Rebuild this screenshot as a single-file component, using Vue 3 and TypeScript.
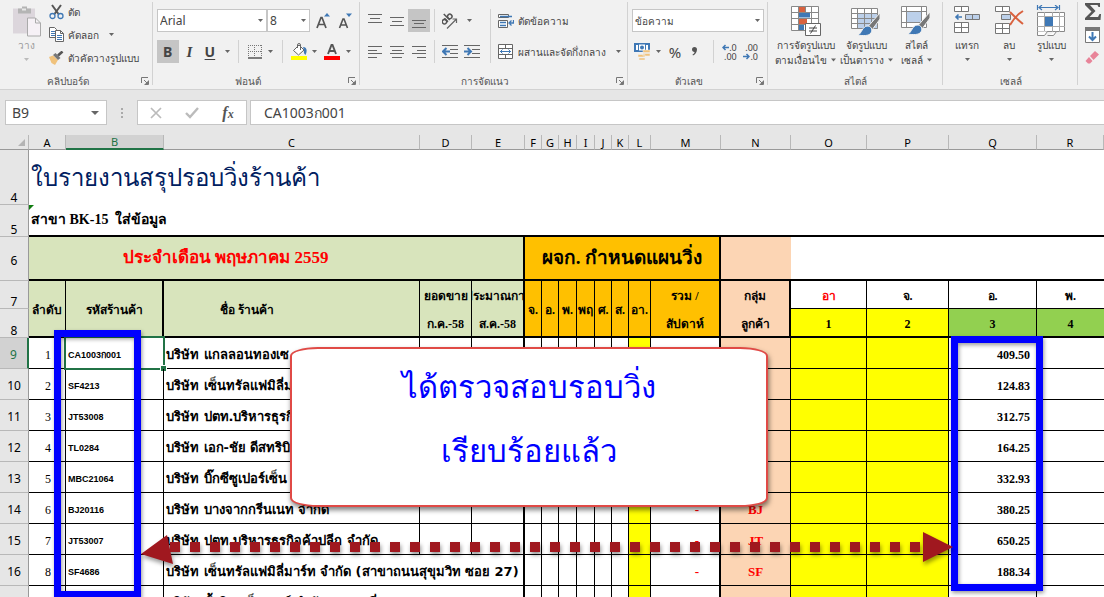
<script setup lang="ts">
import { h, ref } from 'vue'

interface StoreRow {
  row: number
  order: number
  code: string
  name: string
  visits: string
  group: string
  amount: string
}

const Caret = () =>
  h('svg', { class: 'caret', viewBox: '0 0 5 3', width: 5, height: 3, 'aria-hidden': 'true' }, [
    h('path', { d: 'M0 0h5L2.5 3z', fill: 'currentColor' }),
  ])

const Launcher = () =>
  h('svg', { viewBox: '0 0 8 8', width: 8, height: 8, 'aria-hidden': 'true' }, [
    h('path', { d: 'M.5 6V.5H7M3 3l3 3M7.5 3.500v4h-4', fill: 'none', stroke: '#777' }),
    h('path', { d: 'M7 4v3H4z', fill: '#777' }),
  ])

const fontName = ref('Arial')
const fontSize = ref('8')
const numberFormat = ref('ข้อความ')
const cellName = ref('B9')
const formula = ref('CA1003ก001')

const letters = 'ABCDEFGHIJKLMNOPQR'.split('')
const days = ['จ.', 'อ.', 'พ.', 'พฤ', 'ศ.', 'ส.', 'อา.']
const dayCells = [0, 1, 2, 3, 4, 5]

const stores: StoreRow[] = [
  { row: 9, order: 1, code: 'CA1003ก001', name: 'บริษัท แกลลอนทองเซ', visits: '', group: '', amount: '409.50' },
  { row: 10, order: 2, code: 'SF4213', name: 'บริษัท เซ็นทรัลแฟมิลี่มา', visits: '', group: '', amount: '124.83' },
  { row: 11, order: 3, code: 'JT53008', name: 'บริษัท ปตท.บริหารธุรกิจ', visits: '', group: '', amount: '312.75' },
  { row: 12, order: 4, code: 'TL0284', name: 'บริษัท เอก-ชัย ดีสทริบิว', visits: '', group: '', amount: '164.25' },
  { row: 13, order: 5, code: 'MBC21064', name: 'บริษัท บิ๊กซีซูเปอร์เซ็น', visits: '', group: '', amount: '332.93' },
  { row: 14, order: 6, code: 'BJ20116', name: 'บริษัท บางจากกรีนเนท จำกัด', visits: '-', group: 'BJ', amount: '380.25' },
  { row: 15, order: 7, code: 'JT53007', name: 'บริษัท ปตท.บริหารธุรกิจค้าปลีก จำกัด', visits: '-', group: 'JT', amount: '650.25' },
  { row: 16, order: 8, code: 'SF4686', name: 'บริษัท เซ็นทรัลแฟมิลี่มาร์ท จำกัด (สาขาถนนสุขุมวิท ซอย 27)', visits: '-', group: 'SF', amount: '188.34' },
]
</script>

<template>
  <div class="app">
    <header class="ribbon">
      <section class="group clipboard">
        <div class="body row-body">
          <button class="big paste" disabled>
            <svg width="28" height="31" viewBox="0 0 28 31">
              <path d="M0 3h22v25H0z" fill="#dcd6dc" />
              <path d="M5 3h4V1h5v2h4v5H5z" fill="#b4b4b4" />
              <path d="M9 3h4v2H9z" fill="#e8e8e8" />
              <path d="M14.500 12.500h8l5 5v13h-13z" fill="#f6f1f6" stroke="#aaa" />
              <path d="M22.500 12.500v5h5" fill="none" stroke="#aaa" />
            </svg>
            <span>วาง</span>
            <Caret />
          </button>
          <div class="stack">
            <button class="line">
              <svg width="15" height="16" viewBox="0 0 15 16">
                <path d="M3 1l6.500 9M12 1L5.500 10" stroke="#555" stroke-width="2" fill="none" />
                <circle cx="3.500" cy="12" r="2.500" fill="none" stroke="#3f78b5" stroke-width="1.300" />
                <circle cx="11.500" cy="12" r="2.500" fill="none" stroke="#3f78b5" stroke-width="1.300" />
              </svg>
              <span>ตัด</span>
            </button>
            <button class="line">
              <svg width="15" height="15" viewBox="0 0 15 15">
                <path d="M.5.500h5l2 2v8h-7z" fill="#fff" stroke="#666" />
                <path d="M2 4.500h4M2 6.500h4M2 8.500h4" stroke="#3f78b5" />
                <path d="M6.500 3.500h5l3 3v8h-8z" fill="#fff" stroke="#666" />
                <path d="M11.500 3.500v3h3" fill="none" stroke="#666" />
                <path d="M8 8.500h5M8 10.500h5M8 12.500h5" stroke="#3f78b5" />
              </svg>
              <span>คัดลอก</span>
              <Caret />
            </button>
            <button class="line">
              <svg width="15" height="14" viewBox="0 0 15 14">
                <path d="M0 6l4-1.500L9 9l-3 5-3.500-2z" fill="#f0c27c" />
                <path d="M4 4l2.500-2 5 5-2.500 2z" fill="#777" />
                <path d="M9 4.500L13.500.500" stroke="#555" stroke-width="2.600" />
              </svg>
              <span>ตัวคัดวางรูปแบบ</span>
            </button>
          </div>
        </div>
        <footer><span>คลิปบอร์ด</span><button class="launch" aria-label="คลิปบอร์ด"><Launcher /></button></footer>
      </section>

      <section class="group font">
        <div class="body">
          <div class="tools">
            <label class="combo name"><select v-model="fontName" aria-label="แบบอักษร"><option>Arial</option></select><Caret /></label>
            <label class="combo size"><select v-model="fontSize" aria-label="ขนาด"><option>8</option></select><Caret /></label>
            <button class="tool w22">
              <svg width="14" height="16" viewBox="0 0 14 16">
                <path d="M1 15L5 4.500h1L10 15M2.500 11.500h6" fill="none" stroke="#555" stroke-width="1.700" />
                <path d="M8 3.500h6L11 0z" fill="#3f78b5" />
              </svg>
            </button>
            <button class="tool w22">
              <svg width="14" height="16" viewBox="0 0 14 16">
                <path d="M1.500 15L5 6h1l3.500 9M3 12h5" fill="none" stroke="#555" stroke-width="1.600" />
                <path d="M8 .500h6L11 4z" fill="#3f78b5" />
              </svg>
            </button>
          </div>
          <div class="tools">
            <button class="tool w22 on"><b>B</b></button>
            <button class="tool w22"><i class="it">I</i></button>
            <button class="tool w20"><b class="under">U</b></button>
            <button class="tool drop"><Caret /></button>
            <span class="sep"></span>
            <button class="tool w16">
              <svg width="14" height="14" viewBox="0 0 14 14">
                <path d="M0 .500h14M0 6.500h14M.5 0v12M6.500 0v12M13.500 0v12" stroke="#777" stroke-dasharray="1 1" />
                <path d="M0 13h14" stroke="#555" stroke-width="1.500" />
              </svg>
            </button>
            <button class="tool drop"><Caret /></button>
            <span class="sep"></span>
            <button class="tool w16">
              <svg width="16" height="17" viewBox="0 0 16 17">
                <path d="M2.500 7.500L8 2l5 5-5.500 5z" fill="#fff" stroke="#666" />
                <path d="M6.500 5V2a1.500 1.500 0 0 1 3 0v5" fill="none" stroke="#666" />
                <path d="M12 4c4 0 4.500 4 2.500 8-1.500-1-2-3-1.500-5z" fill="#3f78b5" />
                <path d="M0 13h16v4H0z" fill="#ff0" />
              </svg>
            </button>
            <button class="tool drop"><Caret /></button>
            <button class="tool w16 gap">
              <svg width="16" height="17" viewBox="0 0 16 17">
                <path d="M4 11l3.500-9h1L12 11M5.500 8h5" fill="none" stroke="#555" stroke-width="1.900" />
                <path d="M0 13h16v4H0z" fill="red" />
              </svg>
            </button>
            <button class="tool drop"><Caret /></button>
          </div>
        </div>
        <footer><span>ฟอนต์</span><button class="launch" aria-label="ฟอนต์"><Launcher /></button></footer>
      </section>

      <section class="group align">
        <div class="body align-body">
          <div class="align-left">
            <div class="tools">
              <button class="tool w22"><svg width="14" height="14" viewBox="0 0 14 14"><path d="M0 .500h14M2 4.500h10M0 8.500h14" class="ln" /></svg></button>
              <button class="tool w22"><svg width="14" height="14" viewBox="0 0 14 14"><path d="M0 3.500h14M2 7.500h10M0 11.500h14" class="ln" /></svg></button>
              <button class="tool w22 on"><svg width="14" height="14" viewBox="0 0 14 14"><path d="M0 6.500h14M2 9.500h10M0 13.500h14" class="ln" /></svg></button>
              <span class="sep tight"></span>
              <button class="tool w22">
                <svg width="16" height="16" viewBox="0 0 16 16">
                  <g transform="rotate(-45 6 8)" fill="none" stroke="#555" stroke-width="1.500">
                    <circle cx="3" cy="6" r="2.200" /><path d="M5.500 3.500v5M8 0v8.500" /><circle cx="10.500" cy="6" r="2.200" />
                  </g>
                  <path d="M5 15.500L14.500 6M10.500 6h4v4" fill="none" stroke="#666" stroke-width="1.200" />
                </svg>
              </button>
              <button class="tool drop"><Caret /></button>
            </div>
            <div class="tools">
              <button class="tool w22"><svg width="14" height="14" viewBox="0 0 14 14"><path d="M0 1.500h14M0 5.500h9M0 8.500h14M0 12.500h9" class="ln" /></svg></button>
              <button class="tool w22"><svg width="14" height="14" viewBox="0 0 14 14"><path d="M0 1.500h14M2 5.500h10M0 8.500h14M2 12.500h10" class="ln" /></svg></button>
              <button class="tool w22"><svg width="14" height="14" viewBox="0 0 14 14"><path d="M0 1.500h14M5 5.500h9M0 8.500h14M5 12.500h9" class="ln" /></svg></button>
              <span class="sep tight"></span>
              <button class="tool w22">
                <svg width="16" height="14" viewBox="0 0 16 14"><path d="M0 .500h16M8 4.500h8M8 8.500h8M0 12.500h16" class="ln" /><path d="M8 6.500H2M4.500 3L1 6.500 4.500 10" fill="none" stroke="#3f78b5" stroke-width="2" /></svg>
              </button>
              <button class="tool w22">
                <svg width="16" height="14" viewBox="0 0 16 14"><path d="M0 .500h16M8 4.500h8M8 8.500h8M0 12.500h16" class="ln" /><path d="M0 6.500h6M3.500 3L7 6.500 3.500 10" fill="none" stroke="#3f78b5" stroke-width="2" /></svg>
              </button>
            </div>
          </div>
          <div class="align-right">
            <button class="wide">
              <svg width="16" height="16" viewBox="0 0 16 16">
                <path d="M.5 1.500h10v3H.5zM.5 7.500h9v7H.5z" fill="#fff" stroke="#666" />
                <path d="M2 3.500h12M2 9.500h6M2 12.500h6M15.500 7v3H12M13.500 7.500L11 10l2.500 2.500" stroke="#3f78b5" fill="none" stroke-width="1.300" />
              </svg>
              <span>ตัดข้อความ</span>
            </button>
            <button class="wide">
              <svg width="16" height="16" viewBox="0 0 16 16">
                <path d="M.5.500h14v14H.5zM.5 4.500h14M.5 10.500h14M7.500.500v4M7.500 10.500v4" fill="#fff" stroke="#666" />
                <path d="M2 7.500h11M4.500 5.500l-2 2 2 2M10.500 5.500l2 2-2 2" fill="none" stroke="#3f78b5" />
              </svg>
              <span>ผสานและจัดกึ่งกลาง</span>
              <Caret />
            </button>
          </div>
        </div>
        <footer><span>การจัดแนว</span><button class="launch" aria-label="การจัดแนว"><Launcher /></button></footer>
      </section>

      <section class="group number">
        <div class="body">
          <div class="tools">
            <label class="combo fill"><select v-model="numberFormat" aria-label="รูปแบบตัวเลข"><option>ข้อความ</option></select><Caret /></label>
          </div>
          <div class="tools">
            <button class="tool w22">
              <svg width="17" height="17" viewBox="0 0 17 17">
                <path d="M0 0h16v9H0z" fill="#3f78b5" />
                <path d="M2 2h2v5H2zM12 2h2v5h-2zM5 1.500h6v6H5z" fill="#fff" />
                <circle cx="8" cy="4.500" r="2" fill="#3f78b5" />
                <path d="M9 7h7v2.500H9zM9 10.500h7V13H9zM4 11.500h7V14H4zM5 15h6v2H5z" fill="#f0c27c" stroke="#f1f1f1" stroke-width=".5" />
              </svg>
            </button>
            <button class="tool drop narrow"><Caret /></button>
            <button class="tool w22 pct">%</button>
            <button class="tool w20"><svg width="6" height="9" viewBox="0 0 6 9"><path d="M0 2.500a2.400 2.400 0 0 1 5 0C5 5 3.500 7.500 1 8.500L.5 7.500C2 6.800 2.500 6 2.500 5 1 5 0 4 0 2.500z" fill="#555" /></svg></button>
            <span class="sep"></span>
            <button class="tool decimal"><span><svg width="7" height="7" viewBox="0 0 7 7"><path d="M7 3.500H1M3.500 1L1 3.500 3.500 6" class="arr" /></svg>.0</span><span>.00</span></button>
            <button class="tool decimal"><span>.00</span><span><svg width="7" height="7" viewBox="0 0 7 7"><path d="M0 3.500h6M3.500 1L6 3.500 3.500 6" class="arr" /></svg>.0</span></button>
          </div>
        </div>
        <footer><span>ตัวเลข</span><button class="launch" aria-label="ตัวเลข"><Launcher /></button></footer>
      </section>

      <section class="group styles">
        <div class="body row-body">
          <button class="big s1">
            <svg width="30" height="30" viewBox="0 0 30 30">
              <path d="M.5.500h27v24H.5z" fill="#fff" />
              <path d="M8 0h6v6H8zM8 12h8v6H8z" fill="#d9623f" />
              <path d="M8 6.500h11v5H8zM8 19h5v5H8z" fill="#3f78b5" />
              <path d="M.5.500h27v24H.5zM0 6.500h28M0 12.500h28M0 18.500h28M7.500 0v25M14.500 0v6M20.500 0v25" fill="none" stroke="#888" />
              <path d="M14.500 17.500h15v12h-15z" fill="#fff" stroke="#666" />
              <path d="M18 22h8M18 25h8M24.500 19.500l-5 8" stroke="#444" fill="none" />
            </svg>
            <span>การจัดรูปแบบ</span><span>ตามเงื่อนไข <Caret /></span>
          </button>
          <button class="big s2">
            <svg width="30" height="30" viewBox="0 0 30 30">
              <path d="M.5 2.500h26v20H.5z" fill="#fff" />
              <path d="M7 7h20v16H7z" fill="#bcd0ea" />
              <path d="M.5 2.500h26v20H.5zM0 7.500h27M0 12.500h27M0 17.500h27M6.500 2v21M13.500 2v21M20.500 2v21" fill="none" stroke="#888" />
              <path d="M29 7v6l-8 11-4-3.500z" fill="#777" stroke="#f1f1f1" />
              <path d="M16 20c4 0 6 3 4 7-2 3-8 3-13 2 4-2 4-8 9-9z" fill="#3f78b5" stroke="#f1f1f1" />
            </svg>
            <span>จัดรูปแบบ</span><span>เป็นตาราง <Caret /></span>
          </button>
          <button class="big s3">
            <svg width="30" height="30" viewBox="0 0 30 30">
              <path d="M.5.500h25v21H.5zM0 5.500h26M0 16.500h26M5.500 0v22M20.500 0v22" fill="#fff" stroke="#888" />
              <path d="M6 6h14v10H6z" fill="#bcd0ea" />
              <path d="M29 6v6l-8 11-4-3.500z" fill="#777" stroke="#f1f1f1" />
              <path d="M16 19c4 0 6 3 4 7-2 3-8 3-13 2 4-2 4-8 9-9z" fill="#3f78b5" stroke="#f1f1f1" />
            </svg>
            <span>สไตล์</span><span>เซลล์ <Caret /></span>
          </button>
        </div>
        <footer><span>สไตล์</span></footer>
      </section>

      <section class="group cells">
        <div class="body row-body">
          <button class="big c1">
            <svg width="28" height="30" viewBox="0 0 28 30">
              <path d="M1.500.500h14v5h-14zM8.500.500v5M1.500 16.500h14v10h-14zM8.500 16.500v10M1.500 21.500h14" fill="#fff" stroke="#777" />
              <path d="M12.500 8.500h14v5h-14zM19.500 8.500v5" fill="#bcd0ea" stroke="#777" />
              <path d="M9 11H3M5.500 8.500L3 11l2.500 2.500" fill="none" stroke="#3f78b5" stroke-width="1.600" />
            </svg>
            <span>แทรก</span><Caret />
          </button>
          <button class="big c1">
            <svg width="30" height="30" viewBox="0 0 30 30">
              <path d="M1.500.500h14v5h-14zM8.500.500v5M1.500 17.500h14v10h-14zM8.500 17.500v10M1.500 22.500h14" fill="#fff" stroke="#777" />
              <path d="M7.500 8.500h9v5h-9z" fill="#bcd0ea" stroke="#777" />
              <path d="M16 6c4 4 8 8 13 12M29 5c-5 3-9 7-13 14" fill="none" stroke="#d9623f" stroke-width="2" />
            </svg>
            <span>ลบ</span><Caret />
          </button>
          <button class="big c1">
            <svg width="30" height="32" viewBox="0 0 30 32">
              <path d="M1.500 0v5M23.500 0v5M3 2.500h19M6 0L3 2.500 6 5M19 0l3 2.500L19 5" fill="none" stroke="#3f78b5" stroke-width="1.200" />
              <path d="M1.500 7.500h27v19h-27z" fill="#fff" stroke="#888" />
              <path d="M8.500 7v20M16.500 7v20M23.500 7v20M1 11.500h28M1 21.500h28" stroke="#aaa" />
              <path d="M9 12h8v9H9z" fill="#3f78b5" />
              <path d="M1.500 26.500v4h7l3-4M11.500 30.500h6l3-4" fill="#fff" stroke="#888" />
            </svg>
            <span>รูปแบบ</span><Caret />
          </button>
        </div>
        <footer><span>เซลล์</span></footer>
      </section>

      <section class="group editing">
        <button class="tool"><svg width="16" height="17" viewBox="0 0 16 17"><path d="M0 0h15v4h-1.500L12.500 2H5l5.500 6L4.500 14H13l1.500-3H16l-.5 6H0v-2l6.500-6.500L0 2z" fill="#555" /></svg></button>
        <button class="tool"><svg width="15" height="16" viewBox="0 0 15 16"><path d="M.5.500h14v15H.5z" fill="#fff" stroke="#777" /><path d="M0 0h15v4H0z" fill="#777" /><path d="M7.500 5v8M4 9.500L7.500 13 11 9.500" fill="none" stroke="#3f78b5" stroke-width="2" /></svg></button>
        <button class="tool"><svg width="15" height="14" viewBox="0 0 15 14"><path d="M5 5l5-5 4 3.500-5.500 5.500z" fill="#e88499" /><path d="M4 6l3.500 4L5 12.500H3L.5 10z" fill="#e88499" /></svg></button>
      </section>
    </header>

    <div class="formula-bar">
      <div class="name-box">
        <input v-model="cellName" aria-label="กล่องชื่อ" />
        <svg width="8" height="4" viewBox="0 0 8 4"><path d="M0 0h8L4 4z" fill="#666" /></svg>
      </div>
      <span class="dots"><i></i><i></i><i></i></span>
      <div class="fx-box">
        <button aria-label="ยกเลิก"><svg width="12" height="12" viewBox="0 0 12 12"><path d="M1 1l10 10M11 1L1 11" stroke="#bbb" stroke-width="1.700" /></svg></button>
        <button aria-label="ใส่"><svg width="14" height="12" viewBox="0 0 14 12"><path d="M1 6l4 4L13 1" fill="none" stroke="#bbb" stroke-width="2.400" /></svg></button>
        <button class="fx"><i>f</i><i class="x">x</i></button>
      </div>
      <input v-model="formula" class="formula" aria-label="แถบสูตร" />
    </div>

    <main class="sheet">
      <table>
        <colgroup>
          <col class="c-head" /><col v-for="l in letters" :key="l" :class="'c-' + l" />
        </colgroup>
        <thead>
          <tr>
            <th class="corner"><svg width="7" height="7" viewBox="0 0 7 7"><path d="M7 0v7H0z" fill="#b4b4b4" /></svg></th>
            <th v-for="l in letters" :key="l" :class="{ active: l === 'B' }">{{ l }}</th>
          </tr>
        </thead>
        <tbody>
          <tr class="r4">
            <th>4</th>
            <td colspan="18" class="title">ใบรายงานสรุปรอบวิ่งร้านค้า</td>
          </tr>
          <tr class="r5">
            <th>5</th>
            <td colspan="18" class="branch">สาขา BK-15&nbsp; ใส่ข้อมูล</td>
          </tr>
          <tr class="r6">
            <th class="mid">6</th>
            <td colspan="5" class="green month heavy-r">ประจำเดือน พฤษภาคม 2559</td>
            <td colspan="8" class="orange plan heavy-r">ผจก. กำหนดแผนวิ่ง</td>
            <td class="peach"></td>
            <td colspan="4"></td>
          </tr>
          <tr class="r7">
            <th>7</th>
            <td rowspan="2" class="green hd line-r heavy-b">ลำดับ</td>
            <td rowspan="2" class="green hd heavy-r heavy-b">รหัสร้านค้า</td>
            <td rowspan="2" class="green hd line-r heavy-b shift">ชื่อ ร้านค้า</td>
            <td class="green hd line-r">ยอดขาย</td>
            <td class="green hd heavy-r"><div class="clip">ประมาณการ</div></td>
            <td v-for="d in days" :key="d" rowspan="2" class="orange hd line-r heavy-b"><div class="clip">{{ d }}</div></td>
            <td class="orange hd heavy-r">รวม /</td>
            <td class="peach hd heavy-r">กลุ่ม</td>
            <td class="hd line-r line-b red">อา</td>
            <td class="hd line-r line-b">จ.</td>
            <td class="hd line-r line-b">อ.</td>
            <td class="hd line-b">พ.</td>
          </tr>
          <tr class="r8">
            <th>8</th>
            <td class="green hd line-r heavy-b">ก.ค.-58</td>
            <td class="green hd heavy-r heavy-b">ส.ค.-58</td>
            <td class="orange hd heavy-r heavy-b">สัปดาห์</td>
            <td class="peach hd heavy-r heavy-b">ลูกค้า</td>
            <td class="yellow hd line-r heavy-b">1</td>
            <td class="yellow hd line-r heavy-b">2</td>
            <td class="lime hd line-r heavy-b">3</td>
            <td class="lime hd heavy-b">4</td>
          </tr>
          <tr v-for="s in stores" :key="s.row" class="data">
            <th class="mid" :class="{ active: s.row === 9 }">{{ s.row }}</th>
            <td class="order">{{ s.order }}</td>
            <td class="code">{{ s.code }}<span v-if="s.row === 9" class="selection"></span></td>
            <td class="store" :class="{ 'heavy-r': s.row === 16 }" :colspan="s.row === 16 ? 3 : 1">{{ s.name }}</td>
            <template v-if="s.row !== 16"><td></td><td class="heavy-r"></td></template>
            <td v-for="d in dayCells" :key="d"></td>
            <td class="yellow"></td>
            <td class="visits heavy-r">{{ s.visits }}</td>
            <td class="peach grp">{{ s.group }}</td>
            <td class="yellow"></td>
            <td class="yellow"></td>
            <td class="amount">{{ s.amount }}</td>
            <td class="last"></td>
          </tr>
          <tr class="data">
            <th></th>
            <td></td>
            <td class="code"></td>
            <td class="store heavy-r" colspan="3">บริษัท ตั้งมิตรเซ็นเตอร์ จำกัด (สาขาที่ 1)</td>
            <td v-for="d in dayCells" :key="d"></td>
            <td class="yellow"></td>
            <td class="visits heavy-r"></td>
            <td class="peach grp"></td>
            <td class="yellow"></td>
            <td class="yellow"></td>
            <td class="amount"></td>
            <td class="last"></td>
          </tr>
        </tbody>
      </table>

      <div class="frame codes"></div>
      <div class="frame amounts"></div>
      <svg class="arrow" width="812" height="40" viewBox="0 0 812 40">
        <path d="M29 17h755" fill="none" stroke="#a0181f" stroke-width="10" stroke-dasharray="10 10" />
        <path d="M0 24L26 5l6 29zM782 2v30l30-15z" fill="#a0181f" />
      </svg>
      <div class="callout"><p>ได้ตรวจสอบรอบวิ่ง</p><p>เรียบร้อยแล้ว</p></div>
    </main>
  </div>
</template>

<style>
body { margin: 0; }
</style>

<style scoped>
.app { height: 100vh; overflow: hidden; background: #fff; color: #444; font: 10px/14px "Noto Sans", sans-serif; display: flex; flex-direction: column; }
.app * { box-sizing: border-box; }
button, input, select { font: inherit; color: inherit; border: 0; background: none; padding: 0; margin: 0; }
svg { display: block; flex: none; }
.caret { color: #666; }

.ribbon { flex: none; display: flex; height: 90px; background: #f1f1f1; border-bottom: 1px solid #d2d2d2; overflow: hidden; }
.group { flex: none; display: flex; flex-direction: column; position: relative; }
.group::after { content: ""; position: absolute; right: 0; top: 2px; bottom: 4px; width: 1px; background: #d2d2d2; }
.clipboard { width: 153px; }
.font { width: 207px; }
.align { width: 268px; }
.number { width: 140px; }
.styles { width: 175px; }
.cells { width: 135px; }
.editing { flex: 1 0 26px; padding: 0 0 0 7px; gap: 0; align-items: flex-start; }
.editing::after { display: none; }
.body { flex: 1; padding: 9px 4px 0; display: flex; flex-direction: column; gap: 8px; white-space: nowrap; }
.row-body { flex-direction: row; gap: 0; padding-top: 5px; }
footer { height: 17px; line-height: 18px; text-align: center; position: relative; padding-right: 18px; color: #555; }
.launch { position: absolute; right: 4px; top: 5px; }
.styles footer, .cells footer { padding-right: 0; }
.tools { display: flex; align-items: center; height: 23px; }
.tool { height: 23px; display: flex; align-items: center; justify-content: center; font-size: 14px; }
.w16 { width: 16px; }
.w20 { width: 20px; }
.w22 { width: 22px; }
.drop { width: 16px; }
.narrow { width: 12px; }
.gap { margin-left: 2px; }
.on { background: #c5c5c5; }
.it { font-family: "Liberation Serif", serif; font-size: 15px; font-weight: bold; }
.under { text-decoration: underline; text-underline-offset: 2px; }
.sep { width: 1px; height: 23px; margin: 0 8px 0 3px; background: #d2d2d2; }
.number .sep { margin-left: 8px; }
.sep.tight { margin: 0 4px; }
.ln { fill: none; stroke: #666; }
.arr { fill: none; stroke: #3f78b5; stroke-width: 1.5; }
.combo { position: relative; display: flex; align-items: center; height: 23px; background: #fff; border: 1px solid #c6c6c6; font-size: 12px; }
.combo select { appearance: none; width: 100%; height: 100%; padding: 0 16px 0 2px; outline: 0; }
.combo .caret { position: absolute; right: 3px; }
.name { width: 111px; }
.size { width: 44px; margin-right: 2px; }
.fill { flex: 1; font-size: 10px; }
.big { display: flex; flex-direction: column; align-items: center; justify-content: flex-start; line-height: 14px; }
.big svg:first-child { height: 32px; }
.big > span { display: flex; align-items: center; gap: 4px; height: 14px; margin-top: 1px; }
.big > .caret { margin-top: 6px; }
.paste { width: 45px; color: #999; }
.paste .caret { color: #bbb; }
.stack { display: flex; flex-direction: column; }
.line { display: flex; align-items: center; gap: 4px; height: 23px; }
.stack { margin-top: -5px; }
.line .caret { margin-left: 6px; }
.s1 { width: 68px; }
.s2 { width: 54px; }
.s3 { width: 46px; }
.cells .body { padding-left: 3px; }
.c1 { width: 42px; }
.align-body { flex-direction: row; gap: 3px; }
.align-left { display: flex; flex-direction: column; gap: 8px; width: 123px; }
.align-right { display: flex; flex-direction: column; gap: 8px; border-left: 1px solid #d2d2d2; padding-left: 7px; height: 54px; }
.wide { display: flex; align-items: center; gap: 4px; height: 23px; }
.wide .caret { margin-left: 6px; }
.pct { font-size: 15px; }
.decimal { width: 22px; flex-direction: column; align-items: flex-end; padding-right: 6px; font-size: 9px; line-height: 9px; }
.decimal span { display: flex; align-items: center; }

.formula-bar { flex: none; display: flex; align-items: center; height: 45px; padding-left: 5px; background: #e6e6e6; font-size: 14px; }
.name-box { display: flex; align-items: center; width: 102px; height: 25px; padding: 0 7px 0 6px; background: #fff; border: 1px solid #c6c6c6; }
.name-box input { flex: 1; min-width: 0; }
.dots { display: flex; flex-direction: column; gap: 2px; width: 30px; align-items: center; }
.dots i { width: 2px; height: 2px; background: #aaa; }
.fx-box { display: flex; align-items: center; width: 110px; height: 25px; margin-right: 3px; background: #fff; border: 1px solid #c6c6c6; }
.fx-box button { flex: 1; display: flex; align-items: center; justify-content: center; }
.fx { font: bold 16px "Liberation Serif", serif; color: #555; }
.x { font-size: 12px; padding-top: 4px; }
.formula { flex: 1; min-width: 0; height: 25px; padding: 0 13px; background: #fff; border: 1px solid #c6c6c6; border-right: 0; }

.sheet { position: relative; flex: 1; }
table { width: 100%; table-layout: fixed; border-collapse: separate; border-spacing: 0; color: #000; }
.c-head { width: 29px; }
.c-A { width: 37px; }
.c-B { width: 98px; }
.c-C { width: 256px; }
.c-D { width: 52px; }
.c-E { width: 53px; }
.c-F, .c-G, .c-J, .c-K { width: 17px; }
.c-H, .c-I { width: 18px; }
.c-L { width: 22px; }
.c-M { width: 70px; }
.c-N { width: 70px; }
.c-O { width: 76px; }
.c-P { width: 82px; }
.c-Q { width: 88px; }
th, td { padding: 0; white-space: nowrap; }
th { font: 11px/14px "Noto Sans", sans-serif; background: #e6e6e6; }
thead th { height: 15px; line-height: 13px; border-bottom: 1px solid #999; border-right: 1px solid #b8b8b8; }
thead th.active { background: #d2d2d2; color: #217346; border-bottom: 2px solid #217346; }
.corner svg { margin-left: 18px; }
tbody th { vertical-align: bottom; border-right: 1px solid #999; border-bottom: 1px solid #b8b8b8; font-size: 12px; line-height: 12px; }
tbody th.mid { vertical-align: middle; padding-top: 4px; }
tbody th.active { background: #d2d2d2; color: #217346; border-right: 2px solid #217346; }
td { font-family: "Liberation Serif", serif; }
.r4 { height: 55px; }
.r5 { height: 32px; }
.r6 { height: 44px; }
.r7 { height: 28px; }
.r8 { height: 29px; }
.title { padding-left: 2px; font-size: 24px; line-height: 50px; color: #002060; -webkit-text-stroke: 0; }
.branch { position: relative; padding-left: 2px; font-size: 14px; line-height: 28px; font-weight: bold; }
.branch::before { content: ""; position: absolute; left: 0; top: 0; border-top: 5px solid #107c10; border-right: 5px solid transparent; }
.r5 td, .r6 td { border-bottom: 2px solid #000; }
.month { padding-left: 94px; font-size: 17px; line-height: 26px; font-weight: bold; color: red; }
.plan { text-align: center; font-size: 19px; line-height: 26px; font-weight: bold; }
.hd { padding-top: 2px; text-align: center; font-size: 12px; line-height: 20px; font-weight: bold; }
.shift { padding-right: 90px; }
.clip { display: flex; justify-content: center; overflow: hidden; }
.green { background: #d8e4bc; }
.orange { background: #ffc000; }
.peach { background: #fcd5b4; }
.yellow { background: #ff0; }
.lime { background: #92d050; }
.red { color: red; }
.line-r { border-right: 1px solid #000; }
.line-b { border-bottom: 1px solid #000; }
.data { height: 31px; }
.data td { padding-top: 3px; border-right: 1px solid #000; border-bottom: 1px solid #000; line-height: 20px; }
.data td.last { border-right: 0; }
.heavy-r, .data td.heavy-r { border-right: 2px solid #000; }
.heavy-b { border-bottom: 2px solid #000; }
.data .order { padding-right: 14px; text-align: right; font-size: 12px; }
.data .code { position: relative; padding: 4px 0 0 2px; font: bold 9px/20px "Liberation Sans", sans-serif; }
.selection { position: absolute; left: -2px; top: -2px; right: -2px; bottom: -2px; border: 2px solid #217346; }
.selection::after { content: ""; position: absolute; right: -3px; bottom: -3px; width: 5px; height: 5px; background: #217346; outline: 1px solid #fff; }
.data .store { padding-left: 2px; font-family: "DejaVu Sans", sans-serif; font-size: 13px; font-weight: bold; }
.visits { padding-right: 20px; text-align: right; font-size: 13px; font-weight: bold; color: red; }
.grp { text-align: center; font-size: 13px; font-weight: bold; color: red; }
.amount { padding-right: 6px; text-align: right; font-size: 12px; font-weight: bold; }

.frame { position: absolute; border: 7px solid #00f; box-shadow: 1px 2px 4px rgba(0, 0, 0, .4), inset 1px 2px 4px rgba(0, 0, 0, .4); }
.codes { left: 54px; top: 195px; width: 87px; height: 268px; }
.amounts { left: 951px; top: 201px; width: 92px; height: 255px; }
.arrow { position: absolute; left: 141px; top: 395px; filter: drop-shadow(1px 3px 2px rgba(0, 0, 0, .4)); }
.callout { position: absolute; left: 290px; top: 212px; width: 478px; height: 160px; padding-top: 5px; background: #fff; border: 2px solid #e04a46; border-radius: 28px / 9px; box-shadow: 1px 3px 5px rgba(0, 0, 0, .5); text-align: center; }
.callout p { margin: 0; font: 31px/64px "Noto Sans", sans-serif; color: #00f; }
</style>
